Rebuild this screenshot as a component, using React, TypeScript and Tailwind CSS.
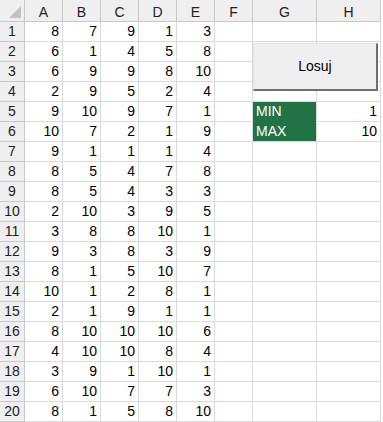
import React from 'react';

// Dane arkusza (kolumny A–E)
const dane: number[][] = [
  [8, 7, 9, 1, 3],
  [6, 1, 4, 5, 8],
  [6, 9, 9, 8, 10],
  [2, 9, 5, 2, 4],
  [9, 10, 9, 7, 1],
  [10, 7, 2, 1, 9],
  [9, 1, 1, 1, 4],
  [8, 5, 4, 7, 8],
  [8, 5, 4, 3, 3],
  [2, 10, 3, 9, 5],
  [3, 8, 8, 10, 1],
  [9, 3, 8, 3, 9],
  [8, 1, 5, 10, 7],
  [10, 1, 2, 8, 1],
  [2, 1, 9, 1, 1],
  [8, 10, 10, 10, 6],
  [4, 10, 10, 8, 4],
  [3, 9, 1, 10, 1],
  [6, 10, 7, 7, 3],
  [8, 1, 5, 8, 10],
];

const kolumny = ['A', 'B', 'C', 'D', 'E', 'F', 'G', 'H'];

const cell = 'border-r border-b border-[#dadada] h-[20px] leading-[19px] text-right pr-[3px]';
const head = 'border-r border-b border-[#c9c9c9] bg-[#efefef] text-center text-[#222]';

export default function App() {
  return (
    <div
      className="relative w-[383px] h-[422px] overflow-hidden bg-white text-[14px] text-black"
      style={{ fontFamily: '"Liberation Sans", Arial, sans-serif' }}
    >
      <div className="grid grid-cols-[25px_38px_38px_38px_38px_38px_38px_64px_64px] w-[381px] border-r border-[#c9c9c9]">
        {/* Naglowek */}
        <div className={`${head} h-[22px] relative`}>
          <div className="absolute right-[3px] bottom-[3px] w-0 h-0 border-l-[12px] border-l-transparent border-b-[12px] border-b-[#c2c2c2]" />
        </div>
        {kolumny.map((k) => (
          <div key={k} className={`${head} h-[22px] leading-[24px]`}>
            {k}
          </div>
        ))}

        {/* Wiersze */}
        {dane.map((wiersz, i) => (
          <React.Fragment key={i}>
            <div className={`${head} h-[20px] leading-[19px]`}>{i + 1}</div>
            {wiersz.map((v, j) => (
              <div key={j} className={cell}>
                {v}
              </div>
            ))}
            <div className={cell} />
            {i === 4 ? (
              <div className="border-r border-[#dadada] h-[20px] leading-[19px] bg-[#217346] text-white pl-[3px]">MIN</div>
            ) : i === 5 ? (
              <div className="border-r border-b border-[#dadada] h-[20px] leading-[19px] bg-[#217346] text-white pl-[3px]">MAX</div>
            ) : (
              <div className={cell} />
            )}
            <div className={cell}>{i === 4 ? 1 : i === 5 ? 10 : ''}</div>
          </React.Fragment>
        ))}
      </div>

      {/* Przycisk */}
      <button className="absolute left-[253px] top-[43px] w-[125px] h-[48px] bg-[#efefef] border border-[#e3e3e3] border-r-2 border-b-2 border-r-[#6e6e6e] border-b-[#6e6e6e] text-[14px] text-black">
        Losuj
      </button>
    </div>
  );
}
